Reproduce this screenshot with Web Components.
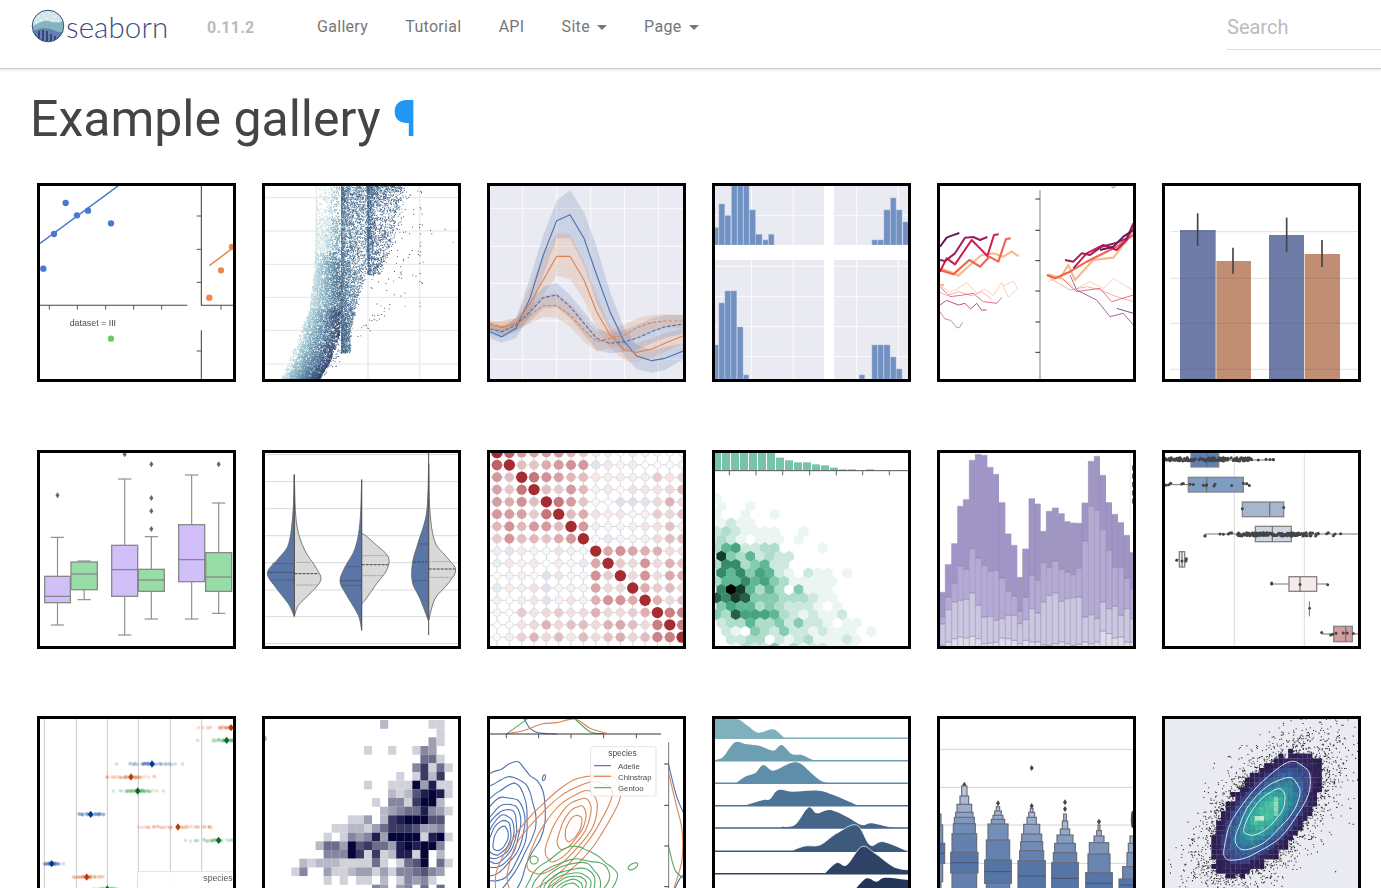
<!DOCTYPE html>
<html lang="en">
<head>
<meta charset="utf-8">
<title>Example gallery - seaborn</title>
<style>
  html, body { margin: 0; height: 100%; overflow: hidden; background: #fff; }
  body { font-family: Roboto, "Liberation Sans", sans-serif; }
</style>
</head>
<body>
<sb-navbar>
  <sb-logo slot="brand"></sb-logo>
  <span slot="version">0.11.2</span>
  <sb-navlink>Gallery</sb-navlink>
  <sb-navlink>Tutorial</sb-navlink>
  <sb-navlink>API</sb-navlink>
  <sb-navlink menu>Site</sb-navlink>
  <sb-navlink menu>Page</sb-navlink>
</sb-navbar>
<sb-gallery heading="Example gallery">
  <sb-thumb plot="anscombe"></sb-thumb>
  <sb-thumb plot="diamonds"></sb-thumb>
  <sb-thumb plot="fmri"></sb-thumb>
  <sb-thumb plot="facet"></sb-thumb>
  <sb-thumb plot="dots"></sb-thumb>
  <sb-thumb plot="bars"></sb-thumb>
  <sb-thumb plot="box"></sb-thumb>
  <sb-thumb plot="violin"></sb-thumb>
  <sb-thumb plot="corr"></sb-thumb>
  <sb-thumb plot="hex"></sb-thumb>
  <sb-thumb plot="stacked"></sb-thumb>
  <sb-thumb plot="hbox"></sb-thumb>
  <sb-thumb plot="strip"></sb-thumb>
  <sb-thumb plot="heat"></sb-thumb>
  <sb-thumb plot="kde"></sb-thumb>
  <sb-thumb plot="ridge"></sb-thumb>
  <sb-thumb plot="boxen"></sb-thumb>
  <sb-thumb plot="mako"></sb-thumb>
</sb-gallery>

<script>
// small helpers: every plot is drawn in the 580 unit box of a 3x crop of the thumbnail
const seeded = seed => () => {
  seed |= 0; seed = seed + 0x6D2B79F5 | 0;
  let t = Math.imul(seed ^ seed >>> 15, 1 | seed);
  t = t + Math.imul(t ^ t >>> 7, 61 | t) ^ t;
  return ((t ^ t >>> 14) >>> 0) / 4294967296;
};
const clamp01 = v => Math.max(0, Math.min(1, v));
const hex2 = c => [1, 3, 5].map(i => parseInt(c.substr(i, 2), 16));
const mix = (a, b, t) => {
  const A = hex2(a), B = hex2(b);
  return '#' + A.map((v, i) => Math.round(v + (B[i] - v) * t).toString(16).padStart(2, '0')).join('');
};
const ramp = (stops, t) => {
  t = Math.max(0, Math.min(.9999, t)) * (stops.length - 1);
  const i = Math.floor(t);
  return mix(stops[i], stops[i + 1], t - i);
};
const interp = (pts, y) => {
  for (let i = 0; i < pts.length - 1; i++) {
    const [y0, x0] = pts[i], [y1, x1] = pts[i + 1];
    if (y <= y0 && y >= y1) return x0 + (x1 - x0) * (y0 - y) / ((y0 - y1) || 1);
  }
  return pts[pts.length - 1][1];
};
const P = pts => 'M' + pts.map(p => p[0].toFixed(1) + ' ' + p[1].toFixed(1)).join('L');
const line = (pts, stroke, w = 3, extra = '') => `<path d="${P(pts)}" fill="none" stroke="${stroke}" stroke-width="${w}" stroke-linejoin="round" ${extra}/>`;
const hl = (x0, x1, y, c, w = 3) => `<path d="M${x0} ${y}H${x1}" stroke="${c}" stroke-width="${w}" fill="none"/>`;
const vl = (x, y0, y1, c, w = 3) => `<path d="M${x} ${y0}V${y1}" stroke="${c}" stroke-width="${w}" fill="none"/>`;
const rect = (x0, y0, x1, y1, fill, extra = '') => `<rect x="${x0}" y="${y0}" width="${x1 - x0}" height="${y1 - y0}" fill="${fill}" ${extra}/>`;
const dot = (x, y, r, fill, extra = '') => `<circle cx="${x}" cy="${y}" r="${r}" fill="${fill}" ${extra}/>`;
const diamond = (x, y, w, h, fill) => `<path d="M${x} ${y - h}L${x + w} ${y}L${x} ${y + h}L${x - w} ${y}Z" fill="${fill}"/>`;
const smooth = (pts, closed = false) => {
  const n = pts.length, at = i => closed ? pts[(i + n) % n] : pts[Math.max(0, Math.min(n - 1, i))];
  let d = `M${pts[0][0]} ${pts[0][1]}`;
  for (let i = 0; i < (closed ? n : n - 1); i++) {
    const a = at(i - 1), b = at(i), c = at(i + 1), e = at(i + 2);
    d += `C${(b[0] + (c[0] - a[0]) / 6).toFixed(1)} ${(b[1] + (c[1] - a[1]) / 6).toFixed(1)} ${(c[0] - (e[0] - b[0]) / 6).toFixed(1)} ${(c[1] - (e[1] - b[1]) / 6).toFixed(1)} ${c[0].toFixed(1)} ${c[1].toFixed(1)}`;
  }
  return d + (closed ? 'Z' : '');
};
const ring = (cx, cy, a, b, rot, seed, wob = .05) => {
  const rnd = seeded(seed), s1 = rnd() * 6, s2 = rnd() * 6, s3 = rnd() * 6, r = rot * Math.PI / 180, pts = [];
  for (let i = 0; i < 28; i++) {
    const t = i / 28 * Math.PI * 2;
    const k = 1 + wob * (Math.sin(3 * t + s1) + .6 * Math.sin(5 * t + s2) + .4 * Math.sin(8 * t + s3));
    const x = a * k * Math.cos(t), y = b * k * Math.sin(t);
    pts.push([cx + x * Math.cos(r) - y * Math.sin(r), cy + x * Math.sin(r) + y * Math.cos(r)]);
  }
  return smooth(pts, true);
};
const contour = (d, c, w = 3) => `<path d="${d}" fill="none" stroke="${c}" stroke-width="${w}"/>`;
const pixels = (list, size) => {
  const groups = {};
  list.forEach(([x, y, c]) => { (groups[c] = groups[c] || []).push(`M${x.toFixed(1)} ${y.toFixed(1)}h${size}v${size}h-${size}z`); });
  return Object.keys(groups).map(c => `<path fill="${c}" d="${groups[c].join('')}"/>`).join('');
};

const GAUZE = '#eaeaf2';

const plots = {
  anscombe: { vb: [30, 33], draw() {
    const blue = '#4878d0', orange = '#ee854a';
    let s = line([[30, 205], [268, 30]], blue, 4.5);
    [[107, 84], [141, 121], [174, 107], [243, 145], [72, 177], [40, 281]].forEach(p => s += dot(p[0], p[1], 9.5, blue));
    s += hl(30, 472, 391, '#444', 3.2);
    [58, 142, 227, 311, 395].forEach(x => s += vl(x, 391, 404, '#555', 3));
    s += `<text x="119" y="452" font-size="26.5" fill="#4a4a4a" font-family="Liberation Sans, sans-serif">dataset = III</text>`;
    s += dot(243, 491, 9.5, '#6acc64');
    s += line([[514, 33], [514, 391], [610, 391]], '#444', 3.2);
    [123, 223, 322].forEach(y => s += hl(500, 514, y, '#555', 3));
    s += vl(573, 391, 404, '#555', 3);
    s += line([[538, 272], [610, 218]], orange, 4.5);
    [[573, 286], [538, 368], [606, 216]].forEach(p => s += dot(p[0], p[1], 9.5, orange));
    s += vl(514, 466, 612, '#444', 3.2) + hl(500, 514, 528, '#555', 3);
    return s;
  } },

  diamonds: { vb: [705, 33], draw() {
    const rnd = seeded(11), pts = [];
    const stops = ['#c8e0e4', '#a4c8d2', '#78a4b8', '#5a84a2', '#446488', '#33496e'];
    let s = '';
    [68, 168, 268, 367, 466, 567].forEach(y => s += hl(705, 1285, y, '#e4e4e4', 3));
    [859, 1014, 1169].forEach(x => s += vl(x, 33, 612, '#e9e9e9', 4));
    const L = [[612, 750], [560, 775], [480, 805], [400, 838], [300, 850], [33, 860]];
    const R = [[612, 868], [560, 900], [480, 928], [400, 932], [33, 932]];
    // light cloud on the left of the first edge
    for (let i = 0; i < 11000; i++) {
      const y = 612 - 579 * Math.pow(rnd(), 1.35);
      const keep = y < 130 ? .16 : y < 260 ? .42 : y < 400 ? .8 : 1;
      if (rnd() > keep) continue;
      const l = interp(L, y), r = interp(R, y), f = rnd();
      const x = l + (r - l) * Math.pow(f, .9) * (y < 300 ? .9 + rnd() * .1 : 1);
      const shade = f * (y > 400 ? 1 : .72) + (y < 230 ? -.26 : 0) + rnd() * .14;
      if (y > 470 && f < .12 && rnd() > .35) continue;
      pts.push([x, y, ramp(stops, shade)]);
    }
    // second edge, sharp on its left, thinning out to the right
    for (let i = 0; i < 4200; i++) {
      const y = 33 + 500 * Math.pow(rnd(), 1.1), w = 24 + 58 * clamp01((470 - y) / 260);
      pts.push([933 + w * Math.pow(rnd(), 1.7) * (1 + rnd() * .25), y, ramp(stops, .42 + rnd() * .5)]);
    }
    // third edge
    for (let i = 0; i < 1700; i++) {
      const y = 33 + 265 * Math.pow(rnd(), 1.5), w = 30 + 60 * clamp01((300 - y) / 170);
      pts.push([1012 + w * Math.pow(rnd(), 1.8) * (1 + rnd() * .3), y, ramp(stops, .6 + rnd() * .4)]);
    }
    for (let i = 0; i < 110; i++) {
      const col = rnd() < .15;
      pts.push([col ? 1168 + rnd() * 3 : 1020 + Math.pow(rnd(), 1.4) * 160, 40 + rnd() * (col ? 370 : 350), '#324a70']);
    }
    for (let i = 0; i < 24; i++) {
      const t = rnd();
      pts.push([975 + t * 85 + rnd() * 26, 465 - t * 90 + rnd() * 26, '#34507a']);
    }
    for (let i = 0; i < 60; i++) {
      const y = 440 + rnd() * 160;
      pts.push([interp(R, y) + rnd() * 28, y, '#3a5480']);
    }
    [[1200, 165], [1204, 175], [1244, 162], [1268, 200], [1128, 50], [1173, 52], [1135, 66], [1124, 392]].forEach(p => pts.push([p[0], p[1], '#324a70']));
    return s + pixels(pts, 2.8);
  } },

  fmri: { vb: [30, 33], bg: GAUZE, draw() {
    const xs = [30, 65, 108, 150, 190, 230, 270, 312, 350, 390, 433, 470, 515, 555, 610];
    const zip = a => a.map((y, i) => [xs[i], y]);
    const band = (up, low, c) => `<path d="${P(zip(up).concat(zip(low).reverse()))}Z" fill="${c}" fill-opacity=".2"/>`;
    const blue = '#4c72b0', orange = '#dd8452';
    let s = '';
    [128, 230, 332, 433, 535].forEach(x => s += vl(x, 33, 612, '#fff', 2.5));
    [100, 214, 325, 438, 553].forEach(y => s += hl(30, 610, y, '#fff', 2.5));
    s += band([455, 462, 430, 310, 180, 78, 45, 112, 215, 350, 460, 510, 525, 515, 505], [490, 503, 490, 420, 300, 190, 190, 270, 385, 470, 545, 582, 593, 585, 553], blue);
    s += band([440, 437, 430, 340, 240, 175, 178, 260, 360, 450, 500, 505, 490, 475, 460], [465, 480, 465, 430, 360, 302, 312, 375, 460, 520, 555, 560, 550, 530, 505], orange);
    s += band([450, 455, 430, 380, 335, 323, 360, 410, 460, 475, 465, 450, 430, 420, 420], [478, 488, 470, 440, 400, 397, 430, 480, 525, 535, 530, 525, 505, 490, 475], blue);
    s += band([435, 440, 430, 395, 360, 355, 385, 430, 470, 465, 450, 430, 420, 418, 420], [458, 470, 465, 445, 425, 428, 455, 500, 530, 520, 510, 490, 470, 460, 458], orange);
    s += line(zip([470, 485, 460, 370, 240, 137, 119, 190, 300, 410, 500, 543, 557, 550, 528]), blue, 3.4);
    s += line(zip([450, 458, 445, 385, 315, 244, 244, 315, 410, 480, 525, 532, 522, 505, 482]), orange, 3.4);
    s += line(zip([462, 470, 450, 410, 368, 360, 395, 445, 490, 505, 500, 490, 470, 455, 447]), blue, 3.4, 'stroke-dasharray="11 5"');
    s += line(zip([445, 455, 448, 420, 392, 392, 420, 465, 500, 490, 480, 458, 443, 438, 438]), orange, 3.4, 'stroke-dasharray="11 5"');
    return s;
  } },

  facet: { vb: [705, 33], bg: GAUZE, draw() {
    let s = '';
    [815, 940, 1130, 1255].forEach(x => s += vl(x, 33, 612, '#fff', 2.5));
    [122, 274, 365, 455, 545].forEach(y => s += hl(705, 1285, y, '#fff', 2.5));
    const bars = (list, base) => list.forEach(([a, b, top]) => s += rect(a, top, b, base, '#7091c2', 'stroke="#a3b8d8" stroke-width="1.5"'));
    bars([[705, 715, 158], [717, 734, 87], [735, 752, 122], [755, 771, 33], [773, 789, 33], [791, 807, 33], [809, 826, 105], [827, 846, 178], [849, 864, 195], [866, 882, 178]], 210);
    bars([[1176, 1192, 195], [1194, 1210, 195], [1212, 1230, 105], [1232, 1248, 69], [1249, 1266, 105], [1269, 1285, 141]], 210);
    bars([[705, 715, 510], [717, 734, 384], [735, 752, 348], [753, 770, 348], [772, 789, 456], [791, 806, 600]], 612);
    bars([[1138, 1154, 600], [1176, 1192, 510], [1194, 1210, 510], [1212, 1230, 510], [1232, 1248, 546], [1249, 1266, 582]], 612);
    s += rect(705, 210, 1285, 255, '#fff') + rect(1032, 33, 1062, 612, '#fff');
    return s;
  } },

  dots: { vb: [30, 33], draw() {
    const pur = '#5f1c60', mag = '#9c1d5b', cri = '#cb1b4f', red = '#f0664a', pea = '#f8b890';
    let s = vl(330, 45, 612, '#888', 3.2);
    [72, 166, 257, 348, 441, 532].forEach(y => s += hl(316, 330, y, '#333', 3));
    s += `<path d="M545 33a5 5 0 0 0 10 0" fill="none" stroke="#666" stroke-width="2"/>`;
    const t = (pts, c, w) => s += `<path d="${P(pts)}" fill="none" stroke="${c}" stroke-width="${w}" stroke-linejoin="round"/>`;
    // left panel, thin lines first
    t([[30, 330], [60, 352], [85, 340], [110, 322], [140, 355], [165, 342], [190, 362], [215, 322], [235, 367], [262, 340], [250, 318], [222, 332]], '#fbcdb2', 2.8);
    t([[30, 352], [50, 362], [85, 350], [125, 362], [155, 350], [185, 372]], '#f7a68c', 2.6);
    t([[30, 335], [60, 365], [100, 360], [130, 355], [160, 380], [200, 385], [216, 367]], '#e8577a', 2.6);
    t([[30, 390], [50, 376], [85, 390], [105, 385], [122, 402], [140, 385], [155, 405], [170, 405]], '#b8417f', 2.8);
    t([[30, 410], [45, 432], [62, 436], [80, 458], [88, 458], [98, 442]], '#b78bb5', 2.8);
    t([[30, 280], [60, 290], [85, 302], [120, 270], [155, 240], [190, 235], [220, 245], [245, 230], [266, 244]], pea, 6.5);
    t([[30, 330], [42, 330]], pea, 6.5);
    t([[30, 285], [70, 298], [118, 255], [150, 275], [178, 245], [205, 260], [228, 192], [242, 190]], red, 6.5);
    t([[30, 290], [50, 250], [75, 268], [125, 195], [150, 220], [172, 243], [192, 180], [206, 178]], cri, 6);
    t([[30, 255], [45, 258], [75, 235], [105, 188], [130, 186], [150, 195], [172, 186]], mag, 6);
    t([[30, 215], [50, 188], [65, 182], [88, 174]], pur, 6);
    // right panel
    t([[355, 320], [390, 305], [440, 340], [480, 320], [520, 340], [550, 310], [590, 335], [610, 345]], '#fbcdb2', 2.8);
    t([[360, 310], [420, 345], [470, 335], [510, 345], [560, 365], [610, 380]], '#f7a68c', 2.6);
    t([[390, 305], [440, 350], [510, 340], [545, 380], [610, 360]], '#e8577a', 2.6);
    t([[420, 300], [440, 345], [500, 375], [540, 425], [580, 415], [610, 450]], '#a24b8e', 2.6);
    t([[560, 400], [610, 415]], '#5f3a6e', 2.6);
    t([[355, 298], [390, 310], [415, 270], [435, 315], [490, 255], [550, 248], [610, 170]], pea, 6.5);
    t([[350, 300], [375, 310], [420, 290], [470, 260], [510, 240], [560, 215], [610, 180]], red, 6.5);
    t([[430, 280], [470, 235], [520, 210], [560, 225], [590, 195], [610, 150]], cri, 6);
    t([[405, 255], [430, 260], [455, 235], [480, 240], [515, 215], [555, 205], [590, 190], [610, 145]], mag, 6);
    t([[510, 225], [550, 215], [580, 185], [610, 165]], pur, 6);
    return s;
  } },

  bars: { vb: [705, 33], draw() {
    let s = rect(750, 165, 857, 612, '#707ca8') + rect(859, 258, 963, 612, '#c18e74') + rect(1017, 180, 1122, 612, '#707ca8') + rect(1124, 237, 1230, 612, '#c18e74');
    [170, 310, 445, 583].forEach(y => s += hl(722, 1285, y, 'rgba(70,70,70,.16)', 3));
    [[803, 115, 213], [909, 218, 296], [1070, 128, 230], [1176, 195, 276]].forEach(e => s += vl(e[0], e[1], e[2], '#444', 5));
    return s;
  } },

  box: { vb: [30, 23], draw() {
    const purple = '#d0bff8', green = '#98dda8', edge = '#8a8a8a';
    let s = '';
    const box = (x0, x1, y0, y1, med, top, bot, fill, fliers = []) => {
      const c = (x0 + x1) / 2;
      s += vl(c, top, bot, edge, 3.4) + hl(c - 20, c + 20, top, edge, 3.4) + hl(c - 20, c + 20, bot, edge, 3.4);
      s += rect(x0, y0, x1, y1, fill, `stroke="${edge}" stroke-width="4"`) + hl(x0, x1, med, '#808080', 3.5);
      fliers.forEach(y => s += diamond(c, y, 6, 9, '#666'));
    };
    box(44, 121, 393, 472, 453, 276, 539, purple, [150]);
    box(123, 202, 350, 433, 386, 347, 463, green);
    box(245, 323, 300, 453, 373, 101, 569, purple, [27]);
    box(325, 403, 372, 438, 404, 274, 521, green, [57, 158, 197, 251]);
    box(446, 524, 238, 409, 343, 89, 521, purple);
    box(527, 605, 322, 438, 395, 173, 504, green, [57]);
    return s;
  } },

  violin: { vb: [705, 23], draw() {
    let s = '';
    [28, 109, 190, 271, 352, 434, 514, 595].forEach(y => s += hl(705, 1285, y, '#d9d9d9', 3));
    const half = (pts, fill) => s += `<path d="${smooth(pts)}Z" fill="${fill}" stroke="#666" stroke-width="2.6"/>`;
    const blue = '#5a76a6', grey = '#d9d9d9';
    half([[793, 88], [789, 200], [776, 295], [745, 340], [712, 383], [740, 430], [775, 475], [793, 513]], blue);
    half([[793, 88], [799, 230], [822, 310], [860, 370], [872, 405], [840, 445], [805, 480], [793, 513]], grey);
    half([[995, 103], [990, 230], [975, 310], [945, 365], [930, 408], [950, 450], [985, 510], [995, 555]], blue);
    half([[995, 268], [1003, 268], [1040, 300], [1075, 335], [1070, 375], [1040, 415], [1005, 465], [995, 475]], grey);
    half([[1196, 55], [1190, 200], [1165, 290], [1148, 350], [1147, 410], [1170, 460], [1195, 525]], blue);
    half([[1196, 55], [1200, 200], [1215, 290], [1250, 335], [1277, 375], [1250, 420], [1215, 460], [1196, 525]], grey);
    [[793, 88, 513], [995, 103, 555], [1196, 23, 569]].forEach(v => s += vl(v[0], v[1], v[2], '#555', 3));
    const q = (y, x0, x1, c, dash) => s += `<path d="M${x0} ${y}H${x1}" stroke="${c}" stroke-width="3" stroke-dasharray="${dash}"/>`;
    [[355, 727, 793], [381, 716, 793], [404, 724, 793], [364, 952, 995], [406, 931, 995], [420, 935, 995], [296, 1167, 1196], [350, 1149, 1196], [406, 1150, 1196]].forEach((d, i) => q(d[0], d[1], d[2], '#3e4a66', i % 3 == 1 ? '9 3' : '2.5 2.5'));
    [[351, 793, 840], [385, 793, 866], [419, 793, 862], [331, 995, 1072], [358, 995, 1075], [391, 995, 1060], [349, 1196, 1262], [371, 1196, 1276], [396, 1196, 1268]].forEach((d, i) => q(d[0], d[1], d[2], i % 3 == 1 ? '#444' : '#888', i % 3 == 1 ? '9 3' : '2.5 2.5'));
    return s;
  } },

  corr: { vb: [30, 23], draw() {
    const rnd = seeded(5), n = 16, val = [];
    const block = i => i < 8 ? 0 : i < 13 ? 1 : 2;
    for (let i = 0; i < n; i++) {
      val.push([]);
      for (let j = 0; j < n; j++) {
        if (j > i) continue;
        const bi = block(i), bj = block(j);
        let v;
        if (i == j) v = 1;
        else if (bi == bj) v = bi == 0 ? .22 + rnd() * .3 : bi == 1 ? .12 + rnd() * .42 : .55 + rnd() * .1;
        else if (bi == 2 && bj == 0) v = j < 2 ? -.06 + rnd() * .1 : .08 + rnd() * .26;
        else if (bi == 2 && bj == 1) v = .12 + rnd() * .28;
        else v = -.12 + rnd() * .24;
        val[i][j] = v;
      }
    }
    [[1, 0, .72], [3, 2, .62], [5, 4, .62], [7, 6, .45]].forEach(([a, b, v]) => { val[a][b] = v; });
    const V = (i, j) => i >= j ? val[i][j] : val[j][i];
    const X = i => 51 + 37.02 * i, Y = i => 22 + 36.9 * i;
    let s = '';
    for (let i = 0; i < n; i++) s += vl(X(i), 23, 612, '#d6d6dc', 3) + hl(30, 610, Y(i), '#d6d6dc', 3);
    for (let i = 0; i < n; i++) for (let j = 0; j < n; j++) {
      const v = V(i, j), a = Math.abs(v);
      const fill = v >= 0 ? mix('#ffffff', '#a62c33', Math.pow(a, .92)) : mix('#ffffff', '#b9bfd6', a * 4);
      const r = 10.5 + 6.5 * Math.pow(a, .55);
      s += dot(X(j), Y(i), r, fill, a < .3 ? 'stroke="#d6d6dc" stroke-width="2"' : '');
    }
    return s;
  } },

  hex: { vb: [705, 23], draw() {
    const colors = ['#ffffff', '#ebf6f2', '#cde9df', '#afddcb', '#84cbb0', '#5fb795', '#46a481', '#358a6a', '#265f4a', '#143d2f', '#000000'];
    let s = '';
    // rows: y, then first x, then density per 29 unit step
    const rows = [
      [158, 709.5, '1'], [183, 695, '01001'],
      [208, 709.5, '1001001'], [233, 695, '01211'], [258, 709.5, '2321111001'], [283, 695, '2321011101'],
      [308, 709.5, '356223300001'], [333, 695, '194352322'],
      [358, 709.5, '37734522'], [383, 695, '275746521021101'],
      [408, 709.5, '3557564311111'], [433, 695, '07a9535304111'],
      [458, 709.5, '8798444333211'], [483, 695, '14655343222101'],
      [508, 709.5, '43866653212112'], [533, 724, '233533424221011'],
      [558, 738.5, '2104324221211101'], [583, 753, '223302123111210'], [608, 767.5, '1322413122111']
    ];
    rows.forEach(([y, x0, str]) => {
      [...str].forEach((ch, k) => {
        const v = ch == 'a' ? 10 : +ch;
        if (!v) return;
        const x = x0 + 29 * k, r = 17, h = 14.9;
        s += `<path d="M${x} ${y - r}L${x + h} ${y - r / 2}V${y + r / 2}L${x} ${y + r}L${x - h} ${y + r / 2}V${y - r / 2}Z" fill="${colors[v]}"/>`;
      });
    });
    s += rect(705, 23, 1285, 76, '#fff');
    [[705, 723, 23], [726, 750, 23], [753, 777, 23], [780, 804, 23], [807, 831, 23], [834, 858, 23], [861, 885, 23], [888, 912, 37], [915, 939, 45], [942, 966, 51], [969, 993, 51], [996, 1020, 57], [1023, 1047, 60], [1050, 1074, 67], [1077, 1101, 72], [1104, 1128, 72], [1158, 1182, 72]].forEach(b => s += rect(b[0], b[2], b[1], 76, '#78c4a8'));
    s += hl(705, 1285, 76, '#555', 3);
    [748, 828, 908, 989, 1069, 1148, 1228].forEach(x => s += vl(x, 76, 90, '#666', 3));
    return s;
  } },

  stacked: { vb: [30, 23], draw() {
    const xs = [30, 46, 65, 83, 100, 118, 136, 154, 172, 190, 207, 226, 244, 262, 278, 297, 315, 332, 349, 367, 386, 404, 421, 439, 456, 475, 493, 510, 528, 546, 564, 582, 600, 618];
    const L1 = [441, 358, 295, 183, 163, 45, 27, 30, 66, 87, 172, 266, 300, 396, 311, 160, 176, 258, 198, 188, 205, 229, 233, 234, 173, 48, 33, 90, 172, 207, 232, 270, 322];
    const L2 = [515, 455, 415, 362, 372, 310, 338, 360, 378, 375, 398, 437, 452, 497, 455, 390, 405, 352, 367, 347, 372, 380, 388, 368, 287, 182, 195, 253, 315, 365, 367, 398, 430];
    const L3 = [536, 493, 470, 465, 462, 443, 480, 515, 513, 525, 520, 510, 510, 535, 523, 490, 503, 470, 450, 443, 468, 460, 457, 455, 515, 508, 520, 470, 490, 483, 510, 490, 520];
    const L4 = [600, 590, 580, 575, 578, 573, 580, 595, 593, 590, 578, 580, 585, 595, 585, 590, 590, 598, 600, 595, 590, 595, 600, 597, 590, 595, 590, 557, 565, 578, 575, 590, 590];
    const layers = [[L1, '#a195c8'], [L2, '#b5aad5'], [L3, '#cbc6e1'], [L4, '#dfdcec']];
    let s = vl(600, 23, 225, '#e3e3e3', 2.5);
    s += `<path d="M608 60V180" stroke="#444" stroke-width="3" stroke-dasharray="15 10"/>`;
    xs.slice(0, -1).forEach((x, i) => {
      const x1 = xs[i + 1];
      layers.forEach(([L, c], k) => {
        const bot = k < 3 ? layers[k + 1][0][i] : 612;
        s += rect(x, L[i], x1, bot, c);
        s += hl(x, x1, L[i], k == 0 ? '#a39ac2' : '#858298', 2);
      });
      s += vl(x, L1[i], 612, '#8a88a0', 1.7);
    });
    return s;
  } },

  hbox: { vb: [705, 23], draw() {
    const rnd = seeded(9), edge = '#858585', pt = '#454545';
    let s = vl(913, 23, 612, '#dcdcdc', 3) + vl(1123, 23, 612, '#dcdcdc', 3);
    const row = (y0, y1, x0, x1, med, lo, hi, fill) => {
      const y = (y0 + y1) / 2;
      s += hl(lo, hi, y, '#777', 3);
      s += rect(x0, y0, x1, y1, fill, `stroke="${edge}" stroke-width="4"`) + vl(med, y0, y1, '#6e6e6e', 3.5);
    };
    const strip = (y, list) => list.forEach(x => s += dot(x, y + (rnd() - .5) * 10, 4.5, pt));
    const many = (n, a, b, pow) => Array.from({ length: n }, () => a + (b - a) * Math.pow(rnd(), pow));
    row(23, 65, 783, 866, 832, 705, 1030, '#5b7fb7');
    strip(42, many(140, 705, 970, 1.1).concat([985, 1008, 1020, 1030, 1030]));
    row(96, 140, 775, 940, 830, 705, 960, '#7f9cc2');
    strip(117, [708, 716, 722, 755, 760, 780, 790, 820, 830, 828, 852, 855, 905, 940, 950, 958]);
    row(170, 214, 937, 1061, 1019, 937, 1061, '#a6b6cf');
    strip(187, [937, 1061]);
    row(243, 289, 976, 1084, 1027, 825, 1285, '#ced6e5');
    strip(267, many(130, 920, 1110, 1).concat(many(18, 1110, 1170, 1), [825, 825, 870, 880, 895, 900, 905, 1190, 1195, 1210, 1215, 1232]));
    row(319, 365, 748, 764, 756, 738, 772, '#eceef4');
    strip(345, [740, 756, 768, 769]);
    row(394, 438, 1077, 1160, 1110, 1025, 1193, '#f4eae8');
    strip(414, [1025, 1025, 1110, 1193]);
    s += vl(1138, 468, 513, '#6e6e6e', 3) + dot(1139, 489, 4, pt);
    row(543, 589, 1211, 1267, 1247, 1175, 1285, '#d29d9c');
    strip(566, [1175, 1202, 1208, 1218, 1240, 1252, 1270]);
    return s;
  } },

  strip: { vb: [30, 27], draw() {
    const rnd = seeded(21);
    let s = '';
    [43, 139, 232, 325, 421, 515].forEach(x => s += vl(x, 27, 612, '#cbcbcb', 3.2));
    const tones = { b: ['#4c72b0', '#003a92'], o: ['#dd8452', '#b43f0c'], g: ['#55a868', '#0b6a1e'] };
    const spot = (y, a, b, mid, t, extras = []) => {
      const [c, d] = tones[t];
      for (let i = 0; i < 40; i++) {
        const u = (rnd() + rnd()) / 2;
        s += dot(mid + (u - .5) * (b - a) * 1.5, y + (rnd() - .5) * 5, 5.5, c, 'opacity=".22"');
      }
      extras.forEach(x => s += dot(x, y, 5.5, c, 'opacity=".25"'));
      s += diamond(mid, y, 8, 11, d);
    };
    spot(53, 545, 640, 603, 'o', [505, 518, 532]);
    spot(91, 565, 640, 590, 'g', [503]);
    spot(162, 320, 420, 366, 'b', [260, 436, 458]);
    spot(201, 245, 365, 303, 'o', [232]);
    spot(243, 275, 360, 323, 'g', [250, 381, 400]);
    spot(313, 140, 210, 182, 'b', [222]);
    spot(351, 370, 525, 444, 'o', [326, 353]);
    spot(391, 490, 640, 566, 'g', [466]);
    spot(461, 50, 90, 65, 'b', [100]);
    spot(501, 133, 205, 170, 'o');
    spot(537, 205, 270, 232, 'g');
    s += `<rect x="322" y="485" width="300" height="120" fill="#fff" fill-opacity=".9" stroke="#dedede" stroke-width="2.5"/>`;
    s += `<text x="520" y="514" font-size="26" fill="#555" font-family="Liberation Sans, sans-serif">species</text>`;
    return s;
  } },

  heat: { vb: [705, 27], draw() {
    const rows = {
      0: { 11: 3, 17: 2, 18: 2 }, 1: { 18: 2 }, 2: { 17: 4, 18: 2 }, 3: { 9: 2, 12: 2, 15: 2, 16: 5, 17: 4 },
      4: { 16: 6, 17: 6, 18: 2 }, 5: { 15: 5, 16: 8, 17: 2, 18: 6, 19: 2 }, 6: { 13: 2, 15: 2, 16: 8, 17: 3, 18: 8 },
      7: { 9: 2, 12: 2, 13: 2, 14: 2, 15: 10, 16: 4, 17: 9, 18: 2, 19: 2 }, 8: { 12: 3, 13: 2, 14: 3, 15: 7, 16: 9, 17: 10, 18: 9, 19: 2 },
      9: { 10: 2, 12: 5, 13: 5, 14: 2, 15: 8, 16: 10, 17: 10, 18: 3 }, 10: { 11: 3, 12: 4, 13: 5, 14: 6, 15: 6, 16: 9, 17: 5, 18: 4, 19: 2 },
      11: { 7: 2, 8: 2, 9: 4, 11: 3, 12: 8, 13: 9, 14: 10, 15: 10, 16: 10, 17: 7, 18: 7 },
      12: { 5: 2, 6: 2, 7: 3, 8: 3, 9: 2, 10: 4, 11: 6, 12: 8, 13: 8, 14: 8, 15: 7, 16: 4, 17: 4, 18: 5 },
      13: { 4: 2, 6: 2, 7: 5, 8: 4, 9: 5, 10: 9, 11: 4, 12: 10, 13: 10, 14: 10, 15: 10, 16: 2, 17: 9, 18: 10, 19: 2 },
      14: { 3: 3, 4: 6, 5: 6, 6: 4, 7: 10, 8: 7, 9: 8, 10: 6, 11: 6, 12: 4, 13: 9, 14: 10, 15: 9, 16: 10, 17: 10, 18: 5 },
      15: { 4: 5, 5: 5, 6: 5, 7: 10, 8: 8, 9: 2, 10: 8, 11: 2, 12: 3, 13: 9, 14: 9, 15: 2, 16: 10, 18: 3 },
      16: { 1: 3, 2: 2, 3: 3, 4: 3, 5: 3, 6: 2, 7: 2, 8: 2, 9: 2, 10: 6, 11: 2, 13: 2, 14: 6, 15: 7, 16: 10, 18: 6, 19: 2 },
      17: { 0: 2, 1: 5, 4: 4, 5: 2, 6: 2, 7: 3, 8: 4, 9: 4, 10: 2, 11: 4, 12: 2, 13: 5, 14: 5, 15: 6, 16: 7, 17: 5, 18: 4 },
      18: { 4: 2, 6: 2, 8: 2, 9: 2, 11: 3, 13: 2, 14: 5, 15: 4, 16: 5, 17: 2 },
      19: { 10: 5, 11: 4, 13: 4, 14: 5, 16: 6, 18: 6 }
    };
    let s = `<text x="697" y="92" font-size="24" fill="#555" font-family="Liberation Sans, sans-serif">0</text>`;
    Object.keys(rows).forEach(j => {
      Object.keys(rows[j]).forEach(k => {
        const x = 784 + 24.2 * k, y = 30 + 26 * j;
        s += `<rect x="${x}" y="${y}" width="24.4" height="26.2" fill="${mix('#ffffff', '#05053a', Math.pow(rows[j][k] / 10, 1.05))}"/>`;
      });
    });
    return s;
  } },

  kde: { vb: [30, 27], draw() {
    const blue = '#4c72b0', orange = '#dd8452', green = '#55a868', w = 3.3;
    let s = '';
    const r = (cx, cy, a, b, rot, c, seed, wob) => s += contour(ring(cx, cy, a, b, rot, seed, wob), c, w);
    // kde rings from the outermost in
    const blueR = [[70, 365, 215, 110, -78, .07], [62, 370, 178, 92, -76, .05], [60, 372, 148, 78, -74, .04], [60, 376, 122, 66, -72, .03], [60, 378, 100, 56, -70, .03], [60, 380, 84, 46, -70, .03], [60, 382, 68, 38, -70, .03], [60, 384, 54, 30, -70, .03], [62, 386, 38, 20, -70, .03]];
    blueR.forEach((b, i) => r(b[0], b[1], b[2], b[3], b[4], blue, 70 + i, b[5]));
    const orR = [[228, 385, 255, 100, -47, .03], [232, 380, 215, 82, -48, .03], [250, 368, 150, 62, -52, .03], [265, 358, 108, 44, -58, .03], [275, 352, 72, 30, -62, .03], [280, 354, 42, 20, -66, .03]];
    orR.forEach((b, i) => r(b[0], b[1], b[2], b[3], b[4], orange, 120 + i, b[5]));
    const grR = [[268, 525, 142, 98, -22, .07], [270, 530, 118, 78, -22, .05], [268, 532, 98, 66, -22, .04], [268, 534, 82, 54, -22, .03], [266, 536, 68, 44, -22, .03], [266, 538, 56, 36, -22, .03], [266, 540, 44, 28, -22, .03], [266, 542, 32, 20, -22, .03]];
    grR.forEach((b, i) => r(b[0], b[1], b[2], b[3], b[4], green, 160 + i, b[5]));
    r(162, 450, 12, 12, 0, green, 200, .02);
    r(459, 469, 16, 8, -30, green, 201, .02);
    r(192, 203, 4, 9, 15, blue, 202, .02);
    // marginals
    const curve = (pts, c) => s += `<path d="${smooth(pts)}" fill="none" stroke="${c}" stroke-width="${w}"/>`;
    curve([[130, 22], [150, 55], [176, 68], [230, 72]], blue);
    curve([[80, 71], [110, 50], [145, 24]], green);
    curve([[285, 27], [330, 65], [370, 71]], green);
    curve([[80, 71], [130, 62], [185, 42], [230, 38], [285, 27], [330, 55], [380, 70]], orange);
    s += hl(30, 543, 72, '#333', 3);
    [79, 176, 273, 371, 469].forEach(x => s += vl(x, 72, 85, '#555', 3));
    s += vl(566, 97, 540, '#777', 3);
    [162, 286, 408, 530].forEach(y => s += hl(553, 566, y, '#333', 3));
    curve([[566, 165], [590, 260], [612, 312]], blue);
    curve([[566, 190], [590, 290], [606, 360], [606, 450], [582, 535]], orange);
    curve([[566, 410], [585, 480], [612, 505]], green);
    curve([[582, 540], [600, 505], [612, 495]], blue);
    // legend
    s += `<rect x="332" y="110" width="196" height="148" rx="6" fill="#fff" fill-opacity=".8" stroke="#e0e0e0" stroke-width="2.5"/>`;
    const txt = (x, y, t, fs = 23.5) => `<text x="${x}" y="${y}" font-size="${fs}" fill="#4a4a4a" font-family="Liberation Sans, sans-serif">${t}</text>`;
    s += txt(385, 139, 'species', 25);
    [['Adelie', 176, 167, blue], ['Chinstrap', 210, 199, orange], ['Gentoo', 242, 233, green]].forEach(([t, y, ly, c]) => {
      s += hl(342, 393, ly, c, 3.5) + txt(414, y, t);
    });
    return s;
  } },

  ridge: { vb: [705, 27], draw() {
    const areas = [
      [85, '#7fb0bb', [[705, 27], [770, 27], [800, 45], [835, 68], [880, 58], [915, 84], [945, 85]]],
      [152, '#6c9fb2', [[705, 150], [730, 140], [765, 97], [800, 103], [840, 108], [880, 122], [905, 105], [935, 132], [965, 135], [1000, 150], [1030, 152]]],
      [220, '#5e8ea9', [[770, 218], [795, 200], [825, 190], [850, 165], [880, 182], [930, 160], [960, 160], [1000, 195], [1030, 216], [1060, 219]]],
      [287, '#4d7497', [[800, 285], [850, 270], [870, 268], [895, 240], [940, 245], [1015, 242], [1060, 255], [1130, 285]]],
      [354, '#456589', [[905, 350], [945, 345], [985, 293], [1010, 310], [1050, 300], [1100, 320], [1145, 345], [1175, 340], [1230, 352], [1270, 354]]],
      [424, '#3d5a7d', [[940, 420], [975, 408], [1020, 405], [1070, 370], [1130, 345], [1170, 405], [1210, 395], [1285, 424]]],
      [491, '#2e4265', [[1035, 489], [1070, 458], [1100, 465], [1145, 410], [1185, 430], [1240, 470], [1285, 480]]],
      [612, '#253558', [[1130, 533], [1160, 505], [1190, 515], [1215, 503], [1285, 510]]]
    ];
    let s = '';
    areas.forEach(([base, c, pts], i) => {
      const first = pts[0], last = pts[pts.length - 1];
      s += `<path d="M705 ${base}H1285" stroke="${c}" stroke-width="4.5" fill="none"/>`;
      s += `<path d="${smooth(pts)}L${last[0]} ${base}L${first[0]} ${base}Z" fill="${c}"/>`;
      if (i == 5 || i == 6) s += `<path d="${smooth(pts)}" fill="none" stroke="#fff" stroke-width="2.5" stroke-opacity=".85"/>`;
    });
    return s;
  } },

  boxen: { vb: [30, 27], draw() {
    let s = '';
    [118, 232, 345, 460].forEach(y => s += hl(30, 610, y, '#d4d4d4', 3));
    const boxen = (cx, med, ys, hw, fliers) => {
      fliers.forEach(f => s += diamond(cx, f, 6, 9, '#444'));
      ys.forEach((y, i) => {
        const t = (i + 1) / ys.length, c = mix('#ccd5e6', '#5675a7', Math.pow(t, .9));
        const bottom = med + (med - y);
        s += rect(cx - hw[i], y, cx + hw[i], bottom, c, 'stroke="#686c78" stroke-width="3.5"');
      });
      s += hl(cx - hw[hw.length - 1], cx + hw[hw.length - 1], med, '#45526e', 3);
    };
    boxen(30, 430, [312, 345, 400], [3, 8, 14], []);
    boxen(103, 458, [228, 258, 283, 307, 322, 341, 371, 427], [8, 13, 22, 26, 30, 33, 37, 41], [224]);
    boxen(204, 485, [290, 303, 316, 328, 342, 390, 450], [5, 10, 15, 20, 30, 35, 40], [280]);
    boxen(305, 498, [295, 307, 322, 343, 372, 395, 422, 452], [4, 9, 14, 24, 30, 33, 36, 41], [174, 288]);
    boxen(405, 505, [312, 333, 357, 375, 400, 428, 458], [4, 8, 14, 24, 31, 35, 40], [277, 297]);
    boxen(507, 520, [345, 362, 378, 398, 432, 488], [3, 7, 15, 29, 33, 40], [335]);
    boxen(605, 525, [378, 400, 428, 470, 507], [5, 10, 14, 27, 38], []);
    s += `<ellipse cx="607" cy="328" rx="4.5" ry="26" fill="#444"/>`;
    return s;
  } },

  mako: { vb: [705, 27], bg: GAUZE, draw() {
    const rnd = seeded(3), cx = 1010, cy = 310, ang = -50 * Math.PI / 180;
    const ca = Math.cos(ang), sa = Math.sin(ang);
    const stops = ['#2a1a48', '#33255f', '#3a3f84', '#34649b', '#2e8f9f', '#34b2a0', '#62d0a6', '#d2f3da'];
    const pts = [];
    for (let i = 0; i < 6000; i++) {
      const g = () => Math.sqrt(-2 * Math.log(rnd() + 1e-6)) * Math.cos(6.283 * rnd());
      const u = g() * 125, v = g() * 62;
      pts.push([cx + u * ca - v * sa, cy + u * sa + v * ca, '#2b2b2b']);
    }
    let s = pixels(pts, 3.2);
    const step = 14.4;
    for (let ix = 0; ix < 44; ix++) for (let iy = 0; iy < 44; iy++) {
      const x = 700 + ix * step, y = 30 + iy * step;
      const dx = x + step / 2 - cx, dy = y + step / 2 - cy;
      const u = dx * ca + dy * sa, v = -dx * sa + dy * ca;
      const d2 = (u / 105) ** 2 + (v / 50) ** 2;
      const n = rnd();
      if (d2 + (n - .5) * 1.1 > 4.8) continue;
      const t = Math.exp(-d2 / 2.6) * .8 - (d2 > 3 ? .1 : 0) + (rnd() - .5) * .07 + (d2 < .3 && rnd() > .72 ? .18 : 0);
      s += `<rect x="${x}" y="${y}" width="${step + .3}" height="${step + .3}" fill="${ramp(stops, t)}"/>`;
    }
    [[180, 76, .035], [132, 58, .03], [85, 37, .03]].forEach(([a, b, w], i) => {
      s += contour(ring(cx + [4, 3, -4][i], cy + [-5, 0, -2][i], a, b, -50, 40 + i, w), '#e8eef2', 2.8);
    });
    return s;
  } }
};

class SbNavlink extends HTMLElement {
  constructor() {
    super();
    this.attachShadow({ mode: 'open' }).innerHTML = `
      <style>
        :host { display: inline-flex; align-items: center; font: 400 16px/24px Roboto, sans-serif; letter-spacing: .3px; color: #777; white-space: nowrap; }
        .caret { display: none; width: 0; height: 0; margin-left: 7px; margin-top: 1px; border: 5px solid transparent; border-top-color: #777; border-bottom: 0; }
        :host([menu]) .caret { display: block; }
      </style>
      <slot></slot><span class="caret"></span>`;
  }
}

class SbLogo extends HTMLElement {
  constructor() {
    super();
    this.attachShadow({ mode: 'open' }).innerHTML = `
      <style>
        :host { display: flex; align-items: center; height: 34px; width: 136px; }
        svg { width: 34px; height: 34px; flex: none; }
        span { font: 300 29.5px/34px Lato, sans-serif; color: #414c80; margin-left: 1px; margin-top: 2px; letter-spacing: .1px; }
      </style>
      <svg viewBox="0 0 34 34">
        <defs><clipPath id="disc"><circle cx="17" cy="17" r="15.6"/></clipPath></defs>
        <g clip-path="url(#disc)">
          <rect width="34" height="34" fill="#d3e6e7"/>
          <path d="M7 7l1 1M12 5l1 1M18 4l1 1M23 7l1 1M10 11l1 1M16 9l1 1M21 11l1 1M27 11l1 1M5 13l1 1" stroke="#f2f8f8" stroke-width="1.4"/>
          <path d="M0 17C7 16 11 11 17 12S27 15 34 11V34H0Z" fill="#86b4be"/>
          <path d="M0 23C6 20 12 18 19 20S29 25 34 22V34H0Z" fill="#5f82b0"/>
          <path d="M3 34V25h2v9zM7 34V22h2v12zM11 34V21h2v13zM15 34V22h2v12zM19 34V25h2v9zM23 34V27h2v7zM27 34V29h2v5z" fill="#3a4678"/>
        </g>
        <circle cx="17" cy="17" r="15.8" fill="none" stroke="#3f4a7c" stroke-width="1"/>
      </svg>
      <span>seaborn</span>`;
  }
}

class SbNavbar extends HTMLElement {
  constructor() {
    super();
    this.attachShadow({ mode: 'open' }).innerHTML = `
      <style>
        :host { display: flex; height: 69px; box-sizing: border-box; padding-left: 31px; background: #fff; border-bottom: 1px solid #ccc; box-shadow: 0 1px 3px rgba(0,0,0,.12); position: relative; }
        .brand { display: flex; margin-top: 9px; height: 34px; }
        .version { margin: 18px 0 0 40px; width: 110px; font: 700 16px/19px Roboto, sans-serif; color: #bbb; letter-spacing: .25px; }
        nav { display: flex; gap: 37.2px; margin-top: 15px; height: 24px; }
        .search { margin-left: auto; width: 154px; height: 40px; margin-top: 10px; box-sizing: border-box; border-bottom: 1px solid #ddd; font: 400 20px/34px Roboto, sans-serif; color: #bbb; }
      </style>
      <div class="brand"><slot name="brand"></slot></div>
      <div class="version"><slot name="version"></slot></div>
      <nav><slot></slot></nav>
      <div class="search" role="search">Search</div>`;
  }
}

class SbGallery extends HTMLElement {
  constructor() {
    super();
    this.attachShadow({ mode: 'open' }).innerHTML = `
      <style>
        :host { display: block; padding: 0 0 0 30px; }
        h1 { margin: 0; padding-top: 21px; height: 93.3px; box-sizing: border-box; font: 400 50px/58px Roboto, sans-serif; color: #444; }
        .mark { color: #2196f3; }
        .grid { display: grid; grid-template-columns: repeat(6, 199px); column-gap: 26px; row-gap: 67.5px; padding: 21px 0 0 7px; }
      </style>
      <h1><span id="t"></span> <span class="mark">¶</span></h1>
      <div class="grid"><slot></slot></div>`;
    this.shadowRoot.getElementById('t').textContent = this.getAttribute('heading');
  }
}

class SbThumb extends HTMLElement {
  constructor() {
    super();
    this.attachShadow({ mode: 'open' });
  }
  connectedCallback() {
    const plot = plots[this.getAttribute('plot')];
    this.shadowRoot.innerHTML = `
      <style>
        :host { display: block; width: 199px; height: 199px; box-sizing: border-box; border: 3px solid #000; background: ${plot.bg || '#fff'}; overflow: hidden; }
        svg { display: block; width: 193px; height: 193px; filter: blur(.4px); }
      </style>
      <svg viewBox="${plot.vb[0]} ${plot.vb[1]} 579 579" preserveAspectRatio="none">${plot.draw()}</svg>`;
  }
}

customElements.define('sb-navlink', SbNavlink);
customElements.define('sb-logo', SbLogo);
customElements.define('sb-navbar', SbNavbar);
customElements.define('sb-gallery', SbGallery);
customElements.define('sb-thumb', SbThumb);
</script>
</body>
</html>
